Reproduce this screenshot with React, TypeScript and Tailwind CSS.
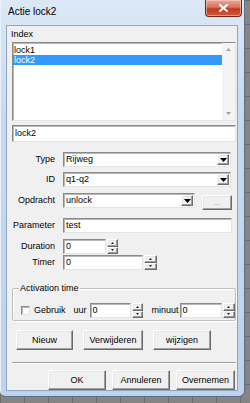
import React from "react";

const sunken =
  "bg-white border border-t-[#8a8a8a] border-l-[#8a8a8a] border-r-[#e4e4e4] border-b-[#e4e4e4] shadow-[inset_1px_1px_0_#b8b8b8]";
const raised =
  "bg-[#f0f0f0] border border-t-white border-l-white border-r-[#6a6a6a] border-b-[#6a6a6a] shadow-[inset_-1px_-1px_0_#a0a0a0,inset_1px_1px_0_#e8e8e8]";

function DownTri() {
  return (
    <svg width="7" height="4" viewBox="0 0 7 4">
      <path d="M0 0H7L3.5 4Z" fill="#000" />
    </svg>
  );
}

function Combo({ value, w }: { value: string; w: string }) {
  return (
    <div className={`${sunken} ${w} h-[15px] flex items-center`}>
      <span className="flex-1 pl-[2px] leading-none">{value}</span>
      <div className={`${raised} w-[12px] h-[11px] mr-[1px] flex items-center justify-center`}>
        <DownTri />
      </div>
    </div>
  );
}

function Spin({ w = "w-[11px]" }: { w?: string }) {
  return (
    <div className={`flex flex-col ${w} h-[15px]`}>
      <div className={`${raised} flex-1 flex items-center justify-center`}>
        <svg width="3" height="2" viewBox="0 0 3 2">
          <path d="M0 2H3L1.5 0Z" fill="#222" />
        </svg>
      </div>
      <div className={`${raised} flex-1 flex items-center justify-center`}>
        <svg width="3" height="2" viewBox="0 0 3 2">
          <path d="M0 0H3L1.5 2Z" fill="#222" />
        </svg>
      </div>
    </div>
  );
}

function Label({ children }: { children: React.ReactNode }) {
  return <div className="w-[48px] text-right leading-none shrink-0">{children}</div>;
}

function Button({ children, w, h = "h-[20px]", disabled }: { children: React.ReactNode; w: string; h?: string; disabled?: boolean }) {
  return (
    <div className={`${raised} ${w} ${h} flex items-center justify-center leading-none ${disabled ? "text-[#a0a0a0]" : ""}`}>
      {children}
    </div>
  );
}

export default function App() {
  return (
    <div className="w-[250px] h-[403px] bg-[#858585] bg-[linear-gradient(#6c6c6c_1px,transparent_1px),linear-gradient(90deg,#6c6c6c_1px,transparent_1px)] bg-[size:24px_24px] overflow-hidden font-['Liberation_Sans',Arial,sans-serif] text-[9px] text-black">
      <div className="w-[245px] h-[397px] flex flex-col rounded-b-[6px] bg-[linear-gradient(180deg,#dce8f5_0%,#c6daef_30%,#bed3eb_100%)] border-r border-b border-[#5b6f88] shadow-[inset_1px_0_0_#e9f1fa]">
        {/* title bar */}
        <div className="h-[26px] flex items-start justify-between shrink-0">
          <div className="pl-[8px] pt-[6px] text-[10px] leading-[12px] text-black">Actie lock2</div>
          <div className="mr-[2px] w-[37px] h-[17px] rounded-b-[4px] border border-t-0 border-[#7a2418] bg-[linear-gradient(180deg,#e9a997_0%,#d9735c_45%,#c0391f_55%,#cf5b3c_100%)] shadow-[inset_0_0_0_1px_rgba(255,220,210,0.5)] flex items-center justify-center">
            <svg width="9" height="8" viewBox="0 0 9 8">
              <path d="M1 1L8 7M8 1L1 7" stroke="#fff" strokeWidth="2" strokeLinecap="square" />
            </svg>
          </div>
        </div>
        {/* client area */}
        <div className="ml-[7px] w-[230px] h-[364px] bg-[#f0f0f0] shadow-[0_0_0_1px_#8ea6c2] flex flex-col">
          <div className="pl-[4px] pt-[3px] h-[14px] leading-[11px]">Index</div>
          {/* listbox */}
          <div className={`${sunken} ml-[5px] mt-[2px] w-[224px] h-[79px] flex`}>
            <div className="flex-1 pt-[2px] flex flex-col">
              <div className="h-[10px] leading-[10px] pl-[1px]">lock1</div>
              <div className="h-[10px] leading-[10px] pl-[1px] bg-[#3399ff] text-white">lock2</div>
            </div>
            <div className="w-[13px] bg-[#f4f4f4] flex flex-col items-center justify-between py-[5px]">
              <svg width="5" height="3" viewBox="0 0 5 3">
                <path d="M0 3H5L2.5 0Z" fill="#a3a3a3" />
              </svg>
              <svg width="5" height="3" viewBox="0 0 5 3">
                <path d="M0 0H5L2.5 3Z" fill="#a3a3a3" />
              </svg>
            </div>
          </div>
          {/* lock2 textbox */}
          <div className={`${sunken} ml-[5px] mt-[4px] w-[224px] h-[17px] flex items-center pl-[2px] leading-none`}>lock2</div>

          <div className="flex items-center mt-[10px] gap-[8px]">
            <Label>Type</Label>
            <Combo value="Rijweg" w="w-[168px]" />
          </div>
          <div className="flex items-center mt-[5px] gap-[8px]">
            <Label>ID</Label>
            <Combo value="q1-q2" w="w-[168px]" />
          </div>
          <div className="flex items-start mt-[6px]">
            <div className="flex items-center gap-[8px] h-[15px]">
              <Label>Opdracht</Label>
              <Combo value="unlock" w="w-[132px]" />
            </div>
            <div className="ml-[7px] mt-[2px]">
              <Button w="w-[30px]" h="h-[15px]" disabled>
                ...
              </Button>
            </div>
          </div>
          <div className="flex items-center mt-[8px] gap-[8px]">
            <Label>Parameter</Label>
            <div className={`${sunken} w-[169px] h-[15px] flex items-center pl-[2px] leading-none`}>test</div>
          </div>
          <div className="flex items-center mt-[6px] gap-[8px]">
            <Label>Duration</Label>
            <div className="flex gap-[1px]">
              <div className={`${sunken} w-[43px] h-[15px] flex items-center pl-[2px] leading-none`}>0</div>
              <Spin />
            </div>
          </div>
          <div className="flex items-center mt-[1px] gap-[8px]">
            <Label>Timer</Label>
            <div className="flex gap-[1px]">
              <div className={`${sunken} w-[80px] h-[15px] flex items-center pl-[2px] leading-none`}>0</div>
              <Spin w="w-[13px]" />
            </div>
          </div>

          {/* activation group */}
          <div className="relative ml-[5px] mt-[18px] w-[224px] h-[33px] border border-[#b9bec2] rounded-[2px] shadow-[inset_1px_1px_0_#fff,1px_1px_0_#fff]">
            <div className="absolute left-[6px] top-[-6px] px-[1px] bg-[#f0f0f0] leading-[11px]">Activation time</div>
            <div className="flex items-center mt-[14px] h-[15px]">
              <div className={`${sunken} ml-[8px] w-[9px] h-[9px]`} />
              <div className="ml-[4px] leading-none">Gebruik</div>
              <div className="ml-[8px] leading-none">uur</div>
              <div className="ml-[3px] flex gap-[1px]">
                <div className={`${sunken} w-[41px] h-[15px] flex items-center pl-[2px] leading-none`}>0</div>
                <Spin />
              </div>
              <div className="ml-[9px] leading-none">minuut</div>
              <div className="ml-[1px] flex gap-[1px]">
                <div className={`${sunken} w-[42px] h-[15px] flex items-center pl-[2px] leading-none`}>0</div>
                <Spin w="w-[12px]" />
              </div>
            </div>
          </div>

          <div className="flex mt-[9px] ml-[9px] gap-[10px]">
            <Button w="w-[57px]">Nieuw</Button>
            <Button w="w-[60px]">Verwijderen</Button>
            <Button w="w-[58px]">wijzigen</Button>
          </div>

          <div className="ml-[5px] mt-[12px] w-[224px] h-[2px] border-t border-t-[#a0a0a0] border-b border-b-white" />

          <div className="flex mt-[6px] ml-[41px] gap-[6px]">
            <Button w="w-[58px]">OK</Button>
            <Button w="w-[58px]">Annuleren</Button>
            <Button w="w-[59px]">Overnemen</Button>
          </div>
        </div>
      </div>
    </div>
  );
}
